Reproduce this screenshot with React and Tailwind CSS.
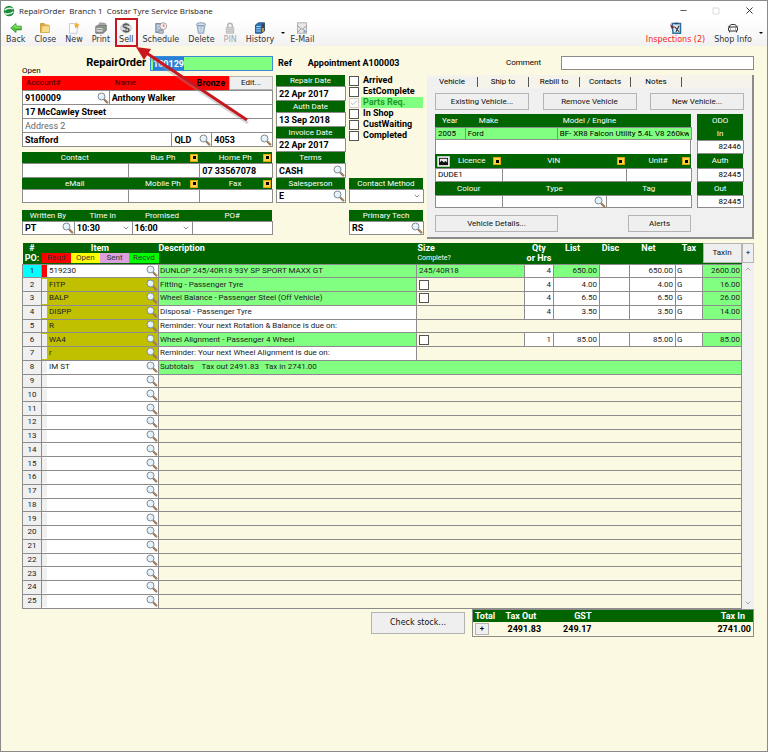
import { useId } from "react";
import { Check, ChevronDown, ChevronUp, Minus, Square, X, CarFront } from "lucide-react";

const Magnifier = () => (
  <svg viewBox="0 0 24 24" className="h-3 w-3 shrink-0">
    <path d="M15 15l6 6" stroke="#a8825a" strokeWidth="4" strokeLinecap="round" />
    <path d="M14 16l6 7" stroke="#5c5048" strokeWidth="1" />
    <circle cx="9" cy="9" r="7" fill="#e4f1fa" stroke="#7d8a94" strokeWidth="2" />
    <path d="M5.500 8.500a4.500 4.500 0 0 1 4-4" stroke="#fff" strokeWidth="2" fill="none" />
  </svg>
);

const SearchButton = () => (
  <button type="button" aria-label="Search" className="flex shrink-0 items-center">
    <Magnifier />
  </button>
);

const DotButton = () => (
  <button
    type="button"
    aria-label="More"
    className="mr-px flex h-2 w-2 shrink-0 items-center justify-center border border-[#e0a800] bg-[#ffd24a]"
  >
    <span className="h-[3px] w-[3px] bg-black" />
  </button>
);

const PushButton = ({ children, className = "" }) => (
  <button
    type="button"
    className={`flex items-center justify-center border border-[#b4b4b4] bg-[#efefef] text-[#111] ${className}`}
  >
    {children}
  </button>
);

const Field = ({
  label,
  value = "",
  search,
  dot,
  icon,
  options,
  head = "h-[11px]",
  body = "h-[14px]",
  labelClass = "text-center",
  inputClass = "text-[9px] font-bold",
  bg = "bg-white",
}) => {
  const id = useId();
  return (
    <div className="min-w-0">
      <div className={`flex items-center bg-[#006400] text-white ${dot && !icon ? "pl-2" : ""} ${head}`}>
        {icon}
        <label htmlFor={id} className={`flex-1 whitespace-nowrap ${labelClass}`}>
          {label}
        </label>
        {dot && <DotButton />}
      </div>
      <div className={`relative -mr-px flex items-center border border-[#8c8c8c] ${bg} ${body}`}>
        {options ? (
          <>
            <select id={id} defaultValue={value} className={`w-full appearance-none pl-0.5 outline-none ${inputClass}`}>
              {options.map((o) => (
                <option key={o}>{o}</option>
              ))}
            </select>
            <ChevronDown size={8} className="pointer-events-none absolute right-0.5 text-[#555]" />
          </>
        ) : (
          <input id={id} defaultValue={value} className={`w-full min-w-0 bg-transparent px-0.5 outline-none ${inputClass}`} />
        )}
        {search && <SearchButton />}
      </div>
    </div>
  );
};

const BackIcon = () => (
  <svg viewBox="0 0 16 16" className="h-3 w-3">
    <path d="M1 8l7-6v3.500h7v5H8V14z" fill="#4fc23c" stroke="#2b8c1e" />
    <path d="M3 8l4-3.500V7h7" stroke="#b4f0a0" fill="none" />
  </svg>
);
const FolderIcon = () => (
  <svg viewBox="0 0 16 16" className="h-3 w-3">
    <path d="M2 2h5l1.500 2H13v10H2z" fill="#d9a93a" stroke="#c09030" />
    <path d="M4 5h10v9H3z" fill="#fbdc8a" stroke="#d9ac4c" />
  </svg>
);
const NewIcon = () => (
  <svg viewBox="0 0 16 16" className="h-3 w-3">
    <path d="M2 2h10v13H2z" fill="#fff" stroke="#b5bfca" />
    <path d="M11.500 0l1.200 3 3 .5-2.400 1.800.6 3.200-2.400-1.700L9 8.500l.7-3.200L7.500 3.500l3-.5z" fill="#f7a823" />
  </svg>
);
const PrintIcon = () => (
  <svg viewBox="0 0 16 16" className="h-3 w-3">
    <path d="M6 1l8 1-1 6H5z" fill="#eee" stroke="#888" />
    <path d="M1 6l4-2h10v7l-4 4H1z" fill="#8e8e8e" stroke="#666" />
    <path d="M2 8h8v5H2z" fill="#d5d5d5" />
    <path d="M3 10h6M7 2.500h5" stroke="#777" />
    <circle cx="13" cy="8" r="1" fill="#58c03c" />
  </svg>
);
const SellIcon = () => (
  <svg viewBox="0 0 16 16" className="h-3 w-3">
    <ellipse cx="8" cy="8" rx="7" ry="6.500" fill="#dfe3e6" stroke="#b4bac0" />
    <path d="M12 5C10.500 2 4.500 2.500 4.500 5.500S12 7.500 12 10.500 6 13.500 4 11" stroke="#5a5a5a" strokeWidth="2" fill="none" />
    <path d="M8 1v14" stroke="#5a5a5a" />
  </svg>
);
const ScheduleIcon = () => (
  <svg viewBox="0 0 16 16" className="h-3 w-3">
    <path d="M1 2h8v12H1z" fill="#9bb1c8" stroke="#667b92" />
    <path d="M2.500 5h5M2.500 8h5M2.500 11h5" stroke="#fff" />
    <circle cx="11" cy="5.500" r="4.500" fill="#f5f5f5" stroke="#9a8080" />
    <path d="M11 3v3l2-1" stroke="#d33" fill="none" />
    <path d="M5 11h6v4H5z" fill="#b9c6d2" stroke="#73808c" />
  </svg>
);
const TrashIcon = () => (
  <svg viewBox="0 0 16 16" className="h-3 w-3">
    <path d="M2.500 3h11l-2 12h-7z" fill="#b4c8dc" stroke="#7d92a8" />
    <ellipse cx="8" cy="3" rx="6" ry="2" fill="#d5e2ee" stroke="#6b8199" />
    <path d="M6 6l.7 8M10 6l-.7 8" stroke="#e6eef6" />
  </svg>
);
const LockIcon = () => (
  <svg viewBox="0 0 16 16" className="h-3 w-3">
    <path d="M5 8V4.500a3 3 0 0 1 6 0V8" stroke="#b5b5b5" strokeWidth="2" fill="none" />
    <path d="M3 7h10v8H3z" fill="#d5d5d5" stroke="#b0b0b0" />
    <path d="M4 10h8M4 12.500h8" stroke="#bbb" />
  </svg>
);
const HistoryIcon = () => (
  <svg viewBox="0 0 16 16" className="h-3 w-3">
    <path d="M2 4l4-3h8v11l-4 3H2z" fill="#2d72b8" stroke="#1d3f66" />
    <path d="M10 4l4-3v11l-4 3z" fill="#3b4754" />
    <path d="M3 6h6M3 9h6M3 12h6" stroke="#a9d4f5" strokeWidth="1.500" />
    <path d="M12 8v5" stroke="#f0b429" strokeWidth="2" />
  </svg>
);
const MailIcon = () => (
  <svg viewBox="0 0 16 16" className="h-3 w-3">
    <path d="M2 1h12v14H2z" fill="#e8e8ea" stroke="#999" />
    <path d="M2 5l6 5 6-5M2 14l4.500-5M14 14L9.500 9" stroke="#888" fill="none" />
    <path d="M10 11l4 2-4 2z" fill="#7da7d9" />
  </svg>
);
const InspectionIcon = () => (
  <svg viewBox="0 0 16 16" className="h-3 w-3">
    <path d="M3 2h11v13H4z" fill="#dcebf7" stroke="#2f6c9e" strokeWidth="2" />
    <path d="M6 1h5v2H6z" fill="#345" />
    <path d="M6 6l6 7M12 5l-4 8" stroke="#333" strokeWidth="1.500" />
    <path d="M0 3l6 4-4 2z" fill="#8c2020" />
  </svg>
);
const ShopIcon = () => <CarFront size={12} />;

const PictureIcon = () => (
  <svg viewBox="0 0 14 12" className="ml-0.5 h-[11px] w-[13px] shrink-0">
    <path d="M.5.5h13v11H.5z" fill="#fff" stroke="#ccc" />
    <path d="M2 2h10v8H2z" fill="#111" />
    <path d="M3 3h8v4L9 5.500 7.500 7 5 5 3 7z" fill="#e8e8e8" />
  </svg>
);

const ToolButton = ({ icon: Icon, label, className = "", children }) => (
  <button type="button" className={`relative flex flex-col items-center px-1 pt-0.5 ${className}`}>
    <Icon />
    <span className="whitespace-nowrap leading-[12px]">{label}</span>
    {children}
  </button>
);

const DropArrow = ({ className = "" }) => (
  <button type="button" aria-label="More options" className={className}>
    <span className="block border-x-2 border-t-2 border-x-transparent border-t-black" />
  </button>
);

const TitleBar = () => (
  <header className="flex h-[19px] items-center bg-white pl-0.5 font-['Open_Sans','Noto_Sans',sans-serif] text-[#222]">
    <svg viewBox="0 0 16 16" className="h-3 w-3">
      <circle cx="8" cy="8" r="7" fill="#1f8a3c" />
      <path d="M2 7c3-3 7-3 12-2M2 11c4 2 8 1 12-2" stroke="#d7f2da" strokeWidth="2" fill="none" />
    </svg>
    <h1 className="ml-1 whitespace-pre">RepairOrder  Branch 1  Costar Tyre Service Brisbane</h1>
    <div className="ml-auto flex items-center gap-6 pr-3 text-[#222]">
      <button type="button" aria-label="Minimise"><Minus size={9} /></button>
      <button type="button" aria-label="Maximise" className="text-[#c8c8c8]"><Square size={8} /></button>
      <button type="button" aria-label="Close window"><X size={11} /></button>
    </div>
  </header>
);

const Toolbar = () => (
  <nav className="flex h-[26px] items-start gap-px bg-linear-to-b from-white to-[#f1f1f1] pl-px font-['DejaVu_Sans',sans-serif] text-[#333]">
    <ToolButton icon={BackIcon} label="Back" />
    <ToolButton icon={FolderIcon} label="Close" />
    <ToolButton icon={NewIcon} label="New" />
    <ToolButton icon={PrintIcon} label="Print" />
    <ToolButton icon={SellIcon} label="Sell">
      <span className="absolute -top-0.5 left-0 h-[29px] w-full border-2 border-[#c8171e]" />
      <svg viewBox="0 0 114 78" className="pointer-events-none absolute left-[21px] top-[26px] z-10 h-[78px] w-[114px] max-w-none">
        <path d="M14 12L112 77" stroke="#999" strokeWidth="3" opacity=".4" />
        <path d="M9 6L111 74" stroke="#c8171e" strokeWidth="3" />
        <path d="M0 1L15 3L8 14z" fill="#c8171e" />
      </svg>
    </ToolButton>
    <ToolButton icon={ScheduleIcon} label="Schedule" />
    <ToolButton icon={TrashIcon} label="Delete" />
    <ToolButton icon={LockIcon} label="PIN" className="text-[#a5a5a5]" />
    <ToolButton icon={HistoryIcon} label="History" />
    <DropArrow className="mt-3 ml-0.5" />
    <ToolButton icon={MailIcon} label="E-Mail" />
    <ToolButton icon={InspectionIcon} label="Inspections (2)" className="ml-auto text-[#f52222]" />
    <ToolButton icon={ShopIcon} label="Shop Info" />
    <DropArrow className="mt-3 mr-1 ml-0.5" />
  </nav>
);

const Customer = () => (
  <section className="pt-px">
    <div className="flex h-[14px]">
      <div className="grid flex-1 grid-cols-[90fr_60fr_56fr] items-center bg-[#ff0000] pl-1 text-[#400000]">
        <label htmlFor="account">Account#</label>
        <label htmlFor="name">Name</label>
        <span className="pr-1 text-right text-[9px] font-bold text-black">Bronze</span>
      </div>
      <PushButton className="w-11 bg-[#e6e6e6]">Edit...</PushButton>
    </div>
    <div className="divide-y divide-[#8c8c8c] border border-[#8c8c8c] bg-white text-[9px] font-bold">
      <div className="grid h-[14px] grid-cols-[87fr_163fr] divide-x divide-[#8c8c8c]">
        <div className="flex items-center">
          <input id="account" defaultValue="9100009" className="w-full min-w-0 px-0.5 outline-none" />
          <SearchButton />
        </div>
        <input id="name" defaultValue="Anthony Walker" className="min-w-0 px-0.5 outline-none" />
      </div>
      <input aria-label="Address 1" defaultValue="17 McCawley Street" className="block h-[14px] w-full px-0.5 outline-none" />
      <input
        aria-label="Address 2"
        placeholder="Address 2"
        className="block h-[14px] w-full px-0.5 font-normal outline-none placeholder:text-[#666]"
      />
      <div className="grid h-[13px] grid-cols-[150fr_40fr_60fr] divide-x divide-[#8c8c8c]">
        <input aria-label="Suburb" defaultValue="Stafford" className="min-w-0 px-0.5 outline-none" />
        <div className="flex items-center">
          <input aria-label="State" defaultValue="QLD" className="w-full min-w-0 px-0.5 outline-none" />
          <SearchButton />
        </div>
        <div className="flex items-center">
          <input aria-label="Postcode" defaultValue="4053" className="w-full min-w-0 px-0.5 outline-none" />
          <SearchButton />
        </div>
      </div>
    </div>
    <div className="mt-[5px] grid grid-cols-[106fr_72fr_73fr] pr-px">
      <Field label="Contact" body="h-[15px]" />
      <Field label="Bus Ph" dot body="h-[15px]" />
      <Field label="Home Ph" value="07 33567078" dot body="h-[15px]" />
      <Field label="eMail" />
      <Field label="Mobile Ph" dot />
      <Field label="Fax" dot />
    </div>
    <div className="mt-[7px] grid grid-cols-[52fr_58fr_61fr_80fr] pr-px">
      <Field label="Written By" value="PT" search />
      <Field label="Time in" value="10:30" options={["10:30", "11:00"]} />
      <Field label="Promised" value="16:00" options={["16:00", "16:30"]} />
      <Field label="PO#" />
    </div>
  </section>
);

const Dates = () => (
  <section className="pr-px">
    <Field label="Repair Date" value="22 Apr 2017" body="h-[15px]" />
    <Field label="Auth Date" value="13 Sep 2018" body="h-[15px]" />
    <Field label="Invoice Date" value="22 Apr 2017" />
    <Field label="Terms" value="CASH" search body="h-[15px]" />
    <Field label="Salesperson" value="E" search />
  </section>
);

const statuses = ["Arrived", "EstComplete", "Parts Req.", "In Shop", "CustWaiting", "Completed"];

const Status = () => (
  <section className="pr-px">
    {statuses.map((s) => {
      const on = s === "Parts Req.";
      return (
        <label key={s} className="flex h-[11px] items-center text-[9px] font-bold">
          <span className="relative flex">
            <input
              type="checkbox"
              defaultChecked={on}
              disabled={on}
              className={`h-[10px] w-[10px] appearance-none border bg-white ${on ? "border-[#ccc]" : "border-[#555]"}`}
            />
            {on && <Check size={8} className="absolute left-px top-px text-[#999]" />}
          </span>
          <span className={`ml-0.5 flex-1 pl-0.5 leading-[11px] ${on ? "bg-[#80ff80] text-[#1c9a2c]" : ""}`}>{s}</span>
        </label>
      );
    })}
    <div className="mt-[37px]">
      <Field label="Contact Method" options={[""]} />
    </div>
    <div className="mt-[7px]">
      <Field label="Primary Tech" value="RS" search />
    </div>
  </section>
);

const Vehicle = () => (
  <section className="border-r-2 border-b-2 border-[#8c8c8c] bg-[#f0f0f0]">
    <div role="tablist" className="flex h-[13px] items-center bg-[#f6f4ea]">
      {["Vehicle", "Ship to", "Rebill to", "Contacts", "Notes"].map((t) => (
        <button
          key={t}
          type="button"
          role="tab"
          className="h-[10px] w-[51px] border-r border-[#555] leading-[10px] first:bg-[#f0f0f0]"
        >
          {t}
        </button>
      ))}
    </div>
    <div className="px-2 pt-[5px] pb-[5px]">
      <div className="flex justify-between">
        <PushButton className="h-[17px] w-[94px]">Existing Vehicle...</PushButton>
        <PushButton className="h-[17px] w-[94px]">Remove Vehicle</PushButton>
        <PushButton className="h-[17px] w-[94px]">New Vehicle...</PushButton>
      </div>
      <div className="mt-1 grid grid-cols-[259fr_47fr] gap-[5px]">
        <div className="bg-white pr-px">
          <div className="grid grid-cols-[30fr_93fr_136fr]">
            <Field label="Year" value="2005" head="h-[13px]" body="h-[13px]" inputClass="" bg="bg-[#80ff80]" />
            <Field label="Make" value="Ford" head="h-[13px]" body="h-[13px]" inputClass="" bg="bg-[#80ff80]" labelClass="pl-3.5" />
            <Field
              label="Model / Engine"
              value="BF- XR8 Falcon Utility 5.4L V8 260kw"
              head="h-[13px]"
              body="h-[13px]"
              inputClass=""
              bg="bg-[#80ff80]"
              labelClass="pl-1.5"
            />
          </div>
          <input aria-label="Vehicle notes" className="-mr-px block h-[14px] w-full border-x border-[#8c8c8c] outline-none" />
          <div className="grid grid-cols-[68fr_125fr_66fr]">
            <Field label="Licence" value="DUDE1" dot head="h-[14px]" inputClass="" icon={<PictureIcon />} />
            <Field label="VIN" dot head="h-[14px]" labelClass="pr-5 text-center" />
            <Field label="Unit#" dot head="h-[14px]" />
          </div>
          <div className="grid grid-cols-[68fr_105fr_86fr]">
            <Field label="Colour" head="h-[13px]" body="h-[13px]" />
            <Field label="Type" search head="h-[13px]" body="h-[13px]" />
            <Field label="Tag" head="h-[13px]" body="h-[13px]" />
          </div>
        </div>
        <div className="pr-px">
          <div className="h-[13px] bg-[#006400] pt-0.5 text-center text-white">ODO</div>
          <Field label="In" value="82446" head="h-[13px]" inputClass="text-right" />
          <Field label="Auth" value="82445" head="h-[14px]" inputClass="text-right" />
          <Field label="Out" value="82445" head="h-[13px]" body="h-[13px]" inputClass="text-right" />
        </div>
      </div>
      <div className="mt-[7px] flex">
        <PushButton className="h-[17px] w-[123px]">Vehicle Details...</PushButton>
        <PushButton className="mr-[53px] ml-auto h-[17px] w-[63px]">Alerts</PushButton>
      </div>
    </div>
  </section>
);

const lines = [
  { item: "519230", desc: "DUNLOP 245/40R18 93Y SP SPORT MAXX GT", size: "245/40R18", qty: 4, list: "650.00", net: "650.00", total: "2600.00", green: true, plain: true },
  { item: "FITP", desc: "Fitting - Passenger Tyre", tick: true, qty: 4, list: "4.00", net: "4.00", total: "16.00", green: true },
  { item: "BALP", desc: "Wheel Balance - Passenger Steel (Off Vehicle)", tick: true, qty: 4, list: "6.50", net: "6.50", total: "26.00", green: true },
  { item: "DISPP", desc: "Disposal - Passenger Tyre", qty: 4, list: "3.50", net: "3.50", total: "14.00" },
  { item: "R", desc: "Reminder: Your next Rotation & Balance is due on:", note: true },
  { item: "WA4", desc: "Wheel Alignment - Passenger 4 Wheel", tick: true, qty: 1, list: "85.00", net: "85.00", total: "85.00", green: true },
  { item: "r", desc: "Reminder: Your next Wheel Alignment is due on:", note: true },
  { item: "IM ST", desc: "Subtotals    Tax out 2491.83   Tax in 2741.00", green: true, plain: true, wide: true },
  ...Array.from({ length: 17 }, () => ({ item: "", desc: "", plain: true, wide: true })),
];

const cell = "border border-[#8c8c8c] p-0";

const LineRow = ({ line, n }) => (
  <tr className="whitespace-nowrap">
    <td className={`${cell} text-center ${n === 1 ? "bg-[#00ffff]" : "bg-[#f0f0f0]"}`}>{n}</td>
    <td className={`${cell} ${line.plain ? "bg-white" : "bg-[#c0c000]"}`}>
      <div className={`flex h-3 items-center border-l-[5px] ${n === 1 ? "border-[#ff0000]" : "border-[#f0f0f0]"}`}>
        <input aria-label={`Item ${n}`} defaultValue={line.item} className="w-full min-w-0 bg-transparent px-0.5 outline-none" />
        <SearchButton />
      </div>
    </td>
    <td
      colSpan={line.wide ? 8 : 1}
      className={`${cell} whitespace-pre pl-px ${line.green ? "bg-[#80ff80]" : line.wide ? "" : "bg-white"}`}
    >
      {line.desc}
    </td>
    {line.note && <td colSpan={7} className={cell} />}
    {line.qty && (
      <>
        <td className={`${cell} pl-0.5 ${line.size ? "bg-[#80ff80]" : ""}`}>
          {line.size}
          {line.tick && (
            <input
              type="checkbox"
              aria-label={`Complete ${n}`}
              className="block h-[10px] w-[10px] appearance-none border border-[#555] bg-white"
            />
          )}
        </td>
        <td className={`${cell} bg-white pr-0.5 text-right`}>{line.qty}</td>
        <td className={`${cell} pr-0.5 text-right ${line.size ? "bg-[#80ff80]" : "bg-white"}`}>{line.list}</td>
        <td className={`${cell} bg-white`} />
        <td className={`${cell} bg-white pr-0.5 text-right`}>{line.net}</td>
        <td className={`${cell} bg-white pl-px`}>G</td>
        <td className={`${cell} bg-[#80ff80] pr-px text-right`}>{line.total}</td>
      </>
    )}
  </tr>
);

const Lines = () => (
  <section className="mt-1 flex">
    <table className="h-[366px] flex-1 table-fixed border-collapse text-[#222]">
      <colgroup>
        <col className="w-[19px]" />
        <col className="w-[117px]" />
        <col />
        <col className="w-[108px]" />
        <col className="w-[29px]" />
        <col className="w-[46px]" />
        <col className="w-[30px]" />
        <col className="w-[46px]" />
        <col className="w-[27px]" />
        <col className="w-[39px]" />
      </colgroup>
      <thead>
        <tr className="h-[21px] bg-[#006400] align-top text-[9px] leading-[10px] text-white">
          <th className="p-0">#<br />PO:</th>
          <th className="p-0">
            Item
            <div className="grid grid-cols-4 text-[8px] font-normal text-[#333]">
              <span className="bg-[#ff0000]">Reqd</span>
              <span className="bg-[#ffff00]">Open</span>
              <span className="bg-[#dda0dd]">Sent</span>
              <span className="bg-[#00ff00]">Recvd</span>
            </div>
          </th>
          <th className="p-0 text-left">Description</th>
          <th className="p-0 pl-px text-left">
            Size
            <div className="text-[7px] font-normal">Complete?</div>
          </th>
          <th className="p-0 whitespace-nowrap">Qty<br />or Hrs</th>
          <th className="p-0 pr-2">List</th>
          <th className="p-0 pr-2">Disc</th>
          <th className="p-0 pr-2">Net</th>
          <th className="p-0">Tax</th>
          <th className="p-0">
            <PushButton className="h-[20px] w-full text-[8px] font-normal">TaxIn</PushButton>
          </th>
        </tr>
      </thead>
      <tbody>
        {lines.map((line, i) => (
          <LineRow key={i} line={line} n={i + 1} />
        ))}
      </tbody>
    </table>
    <div className="flex w-[12px] flex-col">
      <PushButton className="h-[20px]">+</PushButton>
      <div className="flex flex-1 flex-col items-center justify-between bg-[#f0f0f0] py-0.5 text-[#888]">
        <ChevronUp size={8} />
        <ChevronDown size={8} />
      </div>
    </div>
  </section>
);

const Totals = () => (
  <footer className="flex items-start justify-end">
    <PushButton className="mt-[3px] mr-[7px] h-[22px] w-[94px] font-['DejaVu_Sans',sans-serif]">Check stock...</PushButton>
    <table className="w-[282px] table-fixed border-collapse border border-[#8c8c8c] text-[9px] font-bold">
      <thead>
        <tr className="h-[12px] bg-[#006400] text-left text-white">
          <th className="w-[31px] p-0 pl-0.5">Total</th>
          <th className="w-[44px] p-0 pl-0.5">Tax Out</th>
          <th className="w-[44px] p-0 text-right">GST</th>
          <th className="p-0 pr-2 text-right">Tax In</th>
        </tr>
      </thead>
      <tbody>
        <tr className="h-[15px]">
          <td className="p-0 pl-0.5">
            <PushButton className="h-3 w-3.5 text-[8px]">+</PushButton>
          </td>
          <td className="p-0 pl-1">2491.83</td>
          <td className="p-0 text-right">249.17</td>
          <td className="p-0 pr-0.5 text-right">2741.00</td>
        </tr>
      </tbody>
    </table>
  </footer>
);

const App = () => (
  <div className="min-h-screen border border-[#8a8a8a] bg-[#fcf9e3] font-[Roboto,'Liberation_Sans',sans-serif] text-[8px] leading-[10px] text-black">
    <TitleBar />
    <Toolbar />
    <main className="pt-[10px] pr-[13px] pl-[21px]">
      <div className="grid h-[19px] grid-cols-[251fr_148fr_327fr] gap-x-[3px]">
        <div className="grid grid-cols-[128fr_123fr]">
          <div className="flex">
            <span className="self-end leading-[8px]">Open</span>
            <label htmlFor="order" className="ml-auto pr-1 text-[11px] leading-[14px] font-bold">RepairOrder</label>
          </div>
          <div className="h-[15px] border border-[#3c8ad8] bg-[#80ff80] px-0.5">
            <input
              id="order"
              defaultValue="100129"
              className="block h-[13px] w-[31px] bg-[#2a80d8] text-[9px] font-bold text-white outline-none"
            />
          </div>
        </div>
        <div className="flex gap-4 pl-0.5 text-[9px] leading-[15px] font-bold">
          <span>Ref</span>
          <span>Appointment A100003</span>
        </div>
        <div className="grid grid-cols-[134fr_193fr]">
          <label htmlFor="comment" className="pr-5 text-right leading-[14px]">Comment</label>
          <input id="comment" className="h-[14px] min-w-0 border border-[#8c8c8c] bg-white px-0.5 outline-none" />
        </div>
      </div>
      <div className="grid grid-cols-[251fr_70fr_75fr_327fr] gap-x-[3px]">
        <Customer />
        <Dates />
        <Status />
        <Vehicle />
      </div>
      <Lines />
      <Totals />
    </main>
  </div>
);

export default App;
